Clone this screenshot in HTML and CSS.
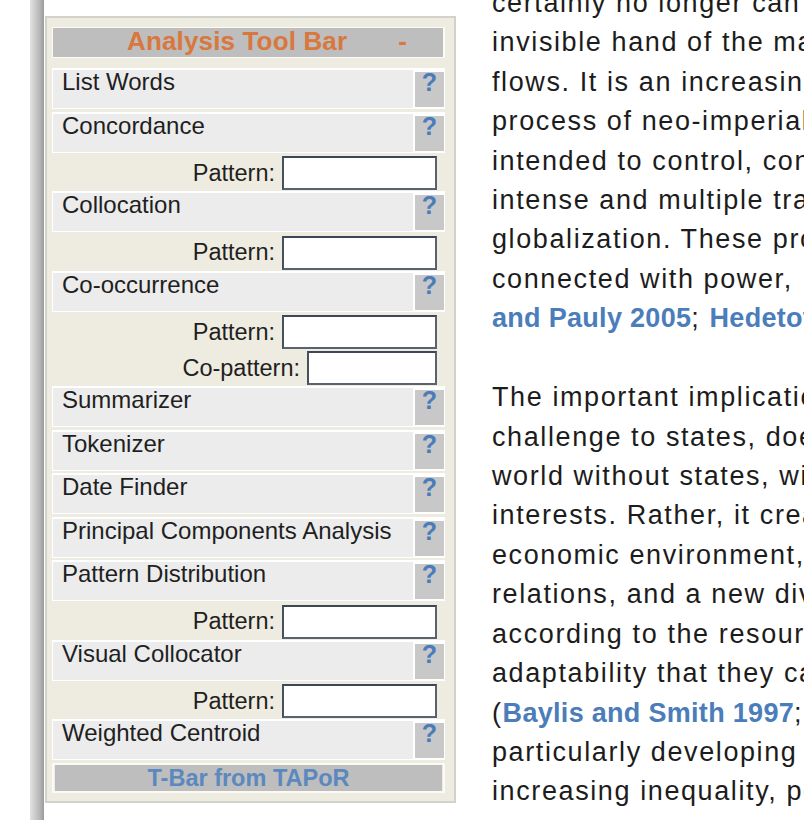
FILE: index.html
```html
<!DOCTYPE html>
<html lang="en">
<head>
<meta charset="utf-8">
<title>Analysis Tool Bar</title>
<link rel="stylesheet" href="styles.css">
</head>
<body>
<div class="page">
  <div class="rail"></div>
  <aside class="toolbar">
    <div class="tb-head"><span class="tb-title">Analysis Tool Bar</span><span class="tb-toggle">-</span></div>
    <div class="tool"><div class="tool-name">List Words</div><div class="tool-help">?</div></div>
    <div class="tool"><div class="tool-name">Concordance</div><div class="tool-help">?</div></div>
    <div class="param"><label>Pattern:</label><input type="text" class="field"></div>
    <div class="tool"><div class="tool-name">Collocation</div><div class="tool-help">?</div></div>
    <div class="param"><label>Pattern:</label><input type="text" class="field"></div>
    <div class="tool"><div class="tool-name">Co-occurrence</div><div class="tool-help">?</div></div>
    <div class="param"><label>Pattern:</label><input type="text" class="field"></div>
    <div class="param"><label>Co-pattern:</label><input type="text" class="field narrow"></div>
    <div class="tool"><div class="tool-name">Summarizer</div><div class="tool-help">?</div></div>
    <div class="tool"><div class="tool-name">Tokenizer</div><div class="tool-help">?</div></div>
    <div class="tool"><div class="tool-name">Date Finder</div><div class="tool-help">?</div></div>
    <div class="tool"><div class="tool-name">Principal Components Analysis</div><div class="tool-help">?</div></div>
    <div class="tool"><div class="tool-name">Pattern Distribution</div><div class="tool-help">?</div></div>
    <div class="param"><label>Pattern:</label><input type="text" class="field"></div>
    <div class="tool"><div class="tool-name">Visual Collocator</div><div class="tool-help">?</div></div>
    <div class="param"><label>Pattern:</label><input type="text" class="field"></div>
    <div class="tool"><div class="tool-name">Weighted Centroid</div><div class="tool-help">?</div></div>
    <div class="tb-foot"><div class="tb-foot-bar">T-Bar from TAPoR</div></div>
  </aside>
  <main class="article">
    <p>
      <span class="line">certainly no longer can be considered merely the</span>
      <span class="line">invisible hand of the market, steering capital</span>
      <span class="line">flows. It is an increasingly political and ideological</span>
      <span class="line">process of neo-imperialism and domination</span>
      <span class="line">intended to control, constrain and direct the</span>
      <span class="line">intense and multiple transactions that constitute</span>
      <span class="line">globalization. These processes are intimately</span>
      <span class="line">connected with power,&nbsp;&nbsp;&nbsp;interests and ideology (<a class="cite">Kahler</a></span>
      <span class="line"><a class="cite">and Pauly 2005</a>; <a class="cite">Hedetoft 2003</a>).</span>
    </p>
    <p>
      <span class="line">The important implication of globalization, as a</span>
      <span class="line">challenge to states, does not mean the advent of a</span>
      <span class="line">world without states, without national powers and</span>
      <span class="line">interests. Rather, it creates a new political and</span>
      <span class="line">economic environment, new forms of international</span>
      <span class="line">relations, and a new division of the world's states</span>
      <span class="line">according to the resources, capabilities and</span>
      <span class="line">adaptability that they can mobilize and exploit</span>
      <span class="line">(<a class="cite">Baylis and Smith 1997</a>; <a class="cite">Held et al. 1999</a>). Small states,</span>
      <span class="line">particularly developing countries, face the risk of</span>
      <span class="line">increasing inequality, poverty and marginalization.</span>
    </p>
  </main>
</div>
</body>
</html>
```

FILE: styles.css
```css
html, body {
  margin: 0;
  padding: 0;
  overflow: hidden;
  background: #fff;
}

body {
  width: 804px;
  height: 820px;
  font-family: "Liberation Sans", Arial, sans-serif;
  color: #1e1e1e;
}

.page {
  display: flex;
  align-items: flex-start;
  height: 820px;
}

.rail {
  flex: none;
  width: 14px;
  height: 820px;
  margin-left: 30px;
  background: linear-gradient(to right, #e2e2e2 0%, #d0d0d0 30%, #b6b6b6 70%, #9a9a9a 100%);
}

.toolbar {
  flex: none;
  width: 411px;
  box-sizing: border-box;
  margin: 16px 0 0 1px;
  border: 2px solid #d3d2ca;
  background: #eeece0;
  padding: 9px 9px 8px 5px;
}

.tb-head {
  display: flex;
  height: 29px;
  border: 1px solid #fbfbf8;
  border-right-width: 2px;
  background: #bebebe;
  color: #d8773e;
  font-weight: bold;
  font-size: 26px;
  line-height: 27px;
  margin-bottom: 10px;
}

.tb-title {
  margin-left: 74px;
  letter-spacing: 0.15px;
}

.tb-toggle {
  margin-left: auto;
  margin-right: 36px;
}

.tool {
  display: flex;
  gap: 2px;
  height: 41px;
  box-sizing: border-box;
  padding: 2px 1px 1px;
  background: #fff;
  margin-bottom: 2.5px;
}

.tool-name {
  flex: 1;
  background: #ececec;
  padding-left: 9px;
  font-size: 24px;
  line-height: 23px;
  color: #1f1f1f;
}

.tool-help {
  width: 29px;
  margin: 2px 0 1px;
  background: #c8c8c8;
  color: #4a7cba;
  font-weight: bold;
  font-size: 25px;
  line-height: 20px;
  text-align: center;
}

.param {
  display: flex;
  justify-content: flex-end;
  align-items: center;
  gap: 7px;
  height: 36px;
  padding-right: 8px;
  font-size: 23.5px;
  color: #1f1f1f;
}

.field {
  box-sizing: border-box;
  width: 155px;
  height: 34px;
  margin: 0;
  padding: 0 4px;
  border: 2px solid #59636f;
  border-top-color: #3d4755;
  border-left-color: #46505e;
  background: #fff;
}

.field.narrow {
  width: 130px;
}

.tb-foot {
  border: 2px solid #fafaf7;
  padding: 0 1px;
}

.tb-foot-bar {
  height: 26px;
  background: #bebebe;
  color: #5a88bf;
  font-weight: bold;
  font-size: 23.5px;
  line-height: 26px;
  text-align: center;
}

.article {
  flex: none;
  margin: -16px 0 0 36px;
  font-size: 27px;
  line-height: 39.4px;
  letter-spacing: 1.6px;
  white-space: nowrap;
  color: #1c1c1c;
}

.article p {
  margin: 0 0 39.6px;
}

.line {
  display: block;
}

.cite {
  color: #4b7dba;
  font-weight: bold;
  letter-spacing: 0.3px;
}
```
